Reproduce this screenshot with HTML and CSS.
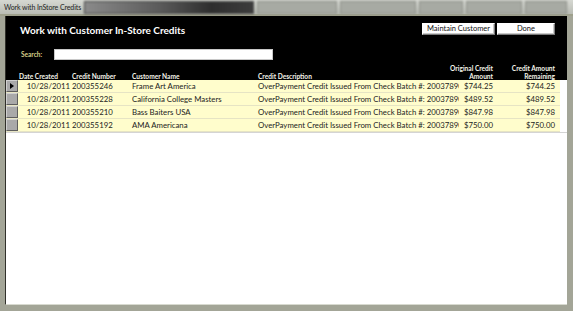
FILE: index.html
```html
<!DOCTYPE html>
<html lang="en">
<head>
<meta charset="UTF-8">
<title>Work with InStore Credits</title>
<link rel="stylesheet" href="styles.css">
</head>
<body>
  <!-- Ventana -->
  <div class="window">
    <div class="titlebar">
      <span class="caption">Work with InStore Credits</span>
      <div class="tabs">
        <span class="tab dark"></span>
        <span class="tab t1"></span>
        <span class="tab t2"></span>
        <span class="tab t3"></span>
        <span class="tab t4"></span>
        <span class="tab t5"></span>
      </div>
    </div>
    <div class="body">
      <div class="client">
        <!-- Encabezado negro -->
        <div class="header">
          <div class="top">
            <h1>Work with Customer In-Store Credits</h1>
            <div class="buttons">
              <button class="btn wide">Maintain Customer</button>
              <button class="btn">Done</button>
            </div>
          </div>
          <div class="search">
            <label>Search:</label>
            <span class="input"></span>
          </div>
          <div class="grid head">
            <span></span>
            <span>Date Created</span>
            <span>Credit Number</span>
            <span>Customer Name</span>
            <span>Credit Description</span>
            <span class="r">Original Credit<br>Amount</span>
            <span class="r">Credit Amount<br>Remaining</span>
            <span></span>
          </div>
        </div>
        <!-- Filas -->
        <div class="rows" id="rows"></div>
        <div class="newrow"></div>
      </div>
    </div>
  </div>
  <script>
    const creditos = [
      ["10/28/2011", "200355246", "Frame Art America", "744.25", "744.25"],
      ["10/28/2011", "200355228", "California College Masters", "489.52", "489.52"],
      ["10/28/2011", "200355210", "Bass Baiters USA", "847.98", "847.98"],
      ["10/28/2011", "200355192", "AMA Americana", "750.00", "750.00"]
    ];
    const rows = document.getElementById("rows");
    creditos.forEach((c, i) => {
      const row = document.createElement("div");
      row.className = "grid row";
      row.innerHTML = `
        <span class="sel">${i === 0 ? '<i class="arrow"></i>' : ''}</span>
        <span class="r date">${c[0]}</span>
        <span>${c[1]}</span>
        <span>${c[2]}</span>
        <span class="clip">OverPayment Credit Issued From Check Batch #: 200378900</span>
        <span class="r">$${c[3]}</span>
        <span class="r">$${c[4]}</span>
        <span></span>
      `;
      rows.appendChild(row);
    });
  </script>
</body>
</html>
```

FILE: styles.css
```css
body {
  margin: 0;
  padding: 0;
  font-family: Lato, "Open Sans", sans-serif;
}
.window {
  width: 573px;
  height: 311px;
  background: #a3a597;
  display: flex;
  flex-direction: column;
  overflow: hidden;
}
.titlebar {
  height: 14px;
  background: linear-gradient(#d6d8d2, #b9bcb4);
  border-bottom: 2px solid #9ea08c;
  display: flex;
  align-items: center;
}
.caption {
  flex-shrink: 0;
  font-size: 7px;
  letter-spacing: -0.1px;
  color: #1e1e1e;
  padding: 0 3px 0 4px;
  white-space: nowrap;
}
.tabs {
  flex: 1;
  display: flex;
  height: 12px;
  gap: 3px;
  filter: blur(0.8px);
}
.tab {
  height: 11px;
  background: #a7aaa3;
  border: 1px solid #8d9088;
}
.tab.dark { width: 168px; background: linear-gradient(90deg, #8a8a8a, #5a5a5a 45%, #2e2e2e 75%, #3c3c3c); border-color: #444; }
.tab.t1 { width: 78px; }
.tab.t2 { width: 74px; }
.tab.t3 { width: 42px; }
.tab.t4 { width: 54px; }
.tab.t5 { width: 40px; }
.body {
  flex: 1;
  display: flex;
  padding: 0 6px 6px 5px;
}
.client {
  flex: 1;
  background: #fff;
  border-left: 1px solid #30302a;
  border-bottom: 1px solid #d8dad0;
  display: flex;
  flex-direction: column;
}
.header {
  background: #000;
  color: #fff;
  padding-top: 6px;
}
.top {
  display: flex;
  align-items: center;
  justify-content: space-between;
  padding: 0 12px 0 14px;
  height: 13px;
}
h1 {
  margin: 0;
  font-size: 10px;
  font-weight: bold;
  margin-top: 2px;
}
.buttons {
  display: flex;
  gap: 2px;
}
.btn {
  font-family: Lato, sans-serif;
  font-size: 7.5px;
  color: #111;
  background: #fff;
  border: 1px solid;
  border-color: #fff #7a7a7a #7a7a7a #fff;
  box-shadow: inset -1px -1px 0 #c8c8c8;
  height: 12px;
  width: 58px;
  padding: 0;
  line-height: 10px;
}
.btn.wide { width: 73px; }
.search {
  display: flex;
  align-items: center;
  margin-top: 14px;
  padding-left: 15px;
  height: 11px;
}
.search label {
  font-size: 6.5px;
  font-weight: bold;
  color: #d8d088;
  width: 33px;
}
.input {
  width: 217px;
  height: 9px;
  background: #fff;
  border: 1px solid #c8c8c8;
}
.grid {
  display: grid;
  grid-template-columns: 12px 53px 60px 126px 205px 33px 62px 3px;
  font-size: 7.8px;
}
.head {
  height: 20px;
  align-items: end;
  font-size: 6.6px;
  font-weight: bold;
  color: #f4f4ea;
  line-height: 8px;
}
.head span {
  white-space: nowrap;
  padding-left: 1px;
}
.head .r {
  justify-self: end;
  text-align: right;
  padding-right: 2px;
}
.row {
  height: 13px;
  background: #fffdcc;
  border-bottom: 1px solid #e6e4c4;
  box-sizing: border-box;
  color: #1c1c1c;
  line-height: 12px;
  width: 554px;
}
.row span {
  white-space: nowrap;
  overflow: hidden;
  padding-left: 1px;
}
.row .clip { margin-right: 3px; }
.row .r {
  text-align: right;
  padding-right: 2px;
}
.row .date { padding: 0 1px 0 3px; }
.row .sel {
  background: #a9a9a9;
  border: 1px solid;
  border-color: #d0d0d0 #5e5e5e #5e5e5e #d0d0d0;
  padding: 0;
  position: relative;
}
.arrow {
  position: absolute;
  left: 3px;
  top: 2px;
  border-left: 4px solid #000;
  border-top: 3px solid transparent;
  border-bottom: 3px solid transparent;
}
.newrow {
  height: 1px;
  background: #d4d4d4;
}
```
